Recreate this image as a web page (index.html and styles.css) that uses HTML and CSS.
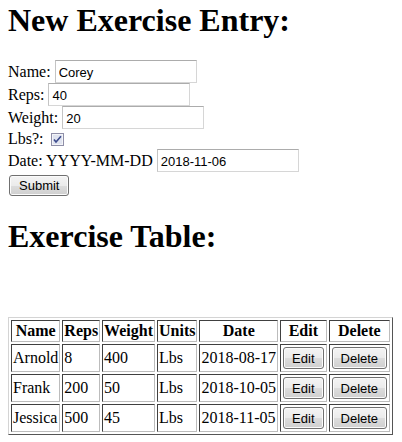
FILE: index.html
```html
<!DOCTYPE html>
<html>
<head>
<meta charset="utf-8">
<title>Exercise Tracker</title>
<link rel="stylesheet" href="styles.css">
</head>
<body>
<h1 class="title first">New Exercise Entry:</h1>
<form class="entry">
  <div class="row">Name:&nbsp;<input class="field" type="text" value="Corey"></div>
  <div class="row">Reps:&nbsp;<input class="field" type="text" value="40"></div>
  <div class="row">Weight:&nbsp;<input class="field" type="text" value="20"></div>
  <div class="row short">Lbs?:&nbsp;<span class="check"><svg width="13" height="13" viewBox="0 0 13 13"><rect x="0.5" y="0.5" width="12" height="12" fill="#dfe3ef" stroke="#8f8fa8"/><rect x="1.5" y="1.5" width="10" height="10" fill="none" stroke="#f3f4f8"/><path d="M3 6.5 L5 9 L10 3.2" fill="none" stroke="#3b4a8c" stroke-width="1.6"/></svg></span></div>
  <div class="row">Date: YYYY-MM-DD&nbsp;<input class="field" type="text" value="2018-11-06"></div>
  <div class="row submit-row"><button class="btn" type="button">Submit</button></div>
</form>
<h1 class="title">Exercise Table:</h1>
<div class="table-wrap">
<table class="grid">
  <thead>
    <tr><th>Name</th><th>Reps</th><th>Weight</th><th>Units</th><th>Date</th><th>Edit</th><th>Delete</th></tr>
  </thead>
  <tbody>
    <tr><td>Arnold</td><td>8</td><td>400</td><td>Lbs</td><td>2018-08-17</td><td><button class="btn small" type="button">Edit</button></td><td><button class="btn small" type="button">Delete</button></td></tr>
    <tr><td>Frank</td><td>200</td><td>50</td><td>Lbs</td><td>2018-10-05</td><td><button class="btn small" type="button">Edit</button></td><td><button class="btn small" type="button">Delete</button></td></tr>
    <tr><td>Jessica</td><td>500</td><td>45</td><td>Lbs</td><td>2018-11-05</td><td><button class="btn small" type="button">Edit</button></td><td><button class="btn small" type="button">Delete</button></td></tr>
  </tbody>
</table>
</div>
</body>
</html>
```

FILE: styles.css
```css
html, body {
  margin: 0;
  padding: 0;
  background: #ffffff;
}
body {
  padding: 0 8px;
  font-family: "Liberation Serif", "Times New Roman", serif;
  font-size: 16px;
  color: #000;
}
.title {
  font-size: 32px;
  font-weight: bold;
  line-height: 37px;
  margin: 21px 0;
}
.title.first {
  margin-top: 2px;
}
.entry {
  margin: 0;
}
.row {
  display: flex;
  align-items: center;
  height: 23px;
  white-space: nowrap;
}
.row.short {
  height: 20px;
}
.field {
  box-sizing: border-box;
  width: 142px;
  height: 23px;
  margin: 0;
  padding: 1px 3px 0;
  border: 1px solid #d6d6d6;
  border-top-color: #acacac;
  border-left-color: #c4c4c4;
  font-family: "Liberation Sans", Arial, sans-serif;
  font-size: 13px;
  color: #000;
  background: #fff;
}
.check {
  display: inline-flex;
  margin-left: 3px;
  padding-top: 1px;
}
.submit-row {
  height: 24px;
  padding-top: 1px;
}
.btn {
  box-sizing: border-box;
  height: 21px;
  margin: 0 0 0 1px;
  padding: 0 9px;
  border: 1px solid #707070;
  border-radius: 3px;
  background: linear-gradient(#f4f4f4, #ebebeb 50%, #dddddd 51%, #cfcfcf);
  font-family: "Liberation Sans", Arial, sans-serif;
  font-size: 13px;
  color: #000;
  box-shadow: inset 0 0 0 1px #fbfbfb;
}
.btn.small {
  display: block;
  height: 22px;
  margin: 1px;
  padding: 0 8px;
}
.table-wrap {
  margin-top: 62px;
}
.grid {
  border: 1px solid;
  border-color: #d4d4d4 #555555 #555555 #d4d4d4;
  border-spacing: 2px;
}
.grid th, .grid td {
  border: 1px solid;
  border-color: #404040 #bcbcbc #bcbcbc #404040;
  padding: 1px;
  line-height: 18px;
  white-space: nowrap;
}
.grid th {
  font-weight: bold;
  text-align: center;
}
.grid td {
  text-align: left;
}
```
